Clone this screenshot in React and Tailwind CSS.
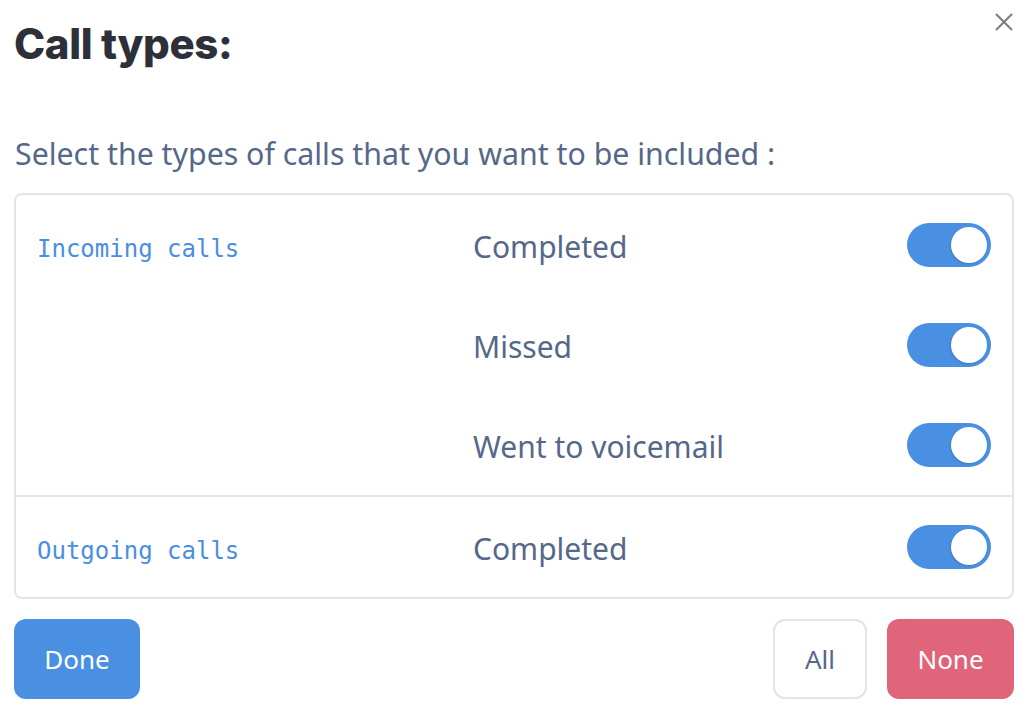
import React from "react";

function Toggle() {
  return (
    <div className="w-[84px] h-[44px] rounded-full bg-[#4a90e2] flex items-center justify-end pr-[4px]">
      <div className="w-[36px] h-[36px] rounded-full bg-white shadow-[-1px_1px_2px_rgba(0,0,0,0.15)]" />
    </div>
  );
}

function Item({ label }) {
  return (
    <div className="h-[100px] flex items-center justify-between pr-[21px]">
      <span className="text-[30px] leading-[40px] pt-[4px] text-[#56688a]" style={{ fontFamily: '"Noto Sans", sans-serif' }}>
        {label}
      </span>
      <Toggle />
    </div>
  );
}

function Group({ title, items, last }) {
  return (
    <div className={"flex " + (last ? "" : "border-b-2 border-[#e4e4e4]")}>
      <div className="w-[457px] pl-[21px] h-[100px] flex items-center pt-[8px]">
        <span className="text-[24px] text-[#4a8ee0]" style={{ fontFamily: '"DejaVu Sans Mono", monospace' }}>
          {title}
        </span>
      </div>
      <div className="flex-1 flex flex-col">
        {items.map((it) => (
          <Item key={it} label={it} />
        ))}
      </div>
    </div>
  );
}

export default function App() {
  return (
    <div className="w-[1036px] h-[714px] bg-white relative" style={{ fontFamily: '"Noto Sans", sans-serif' }}>
      <button className="absolute right-[22px] top-[12px] text-[#7a7a7a]">
        <svg width="20" height="20" viewBox="0 0 20 20">
          <path d="M2 2 L18 18 M18 2 L2 18" stroke="#808080" strokeWidth="2.2" />
        </svg>
      </button>
      <div className="px-[14px] pt-[17px]">
        <h1 className="text-[42px] font-extrabold text-[#2d3039] leading-[54px] tracking-[-0.4px]" style={{ fontFamily: 'Inter, sans-serif' }}>
          Call types:
        </h1>
        <p className="mt-[64px] text-[30.3px] text-[#56688a] leading-[38px] pl-[1px]">
          Select the types of calls that you want to be included :
        </p>
        <div className="mt-[20px] border-2 border-[#e4e4e4] rounded-[8px] w-[1000px]">
          <Group title="Incoming calls" items={["Completed", "Missed", "Went to voicemail"]} />
          <Group title="Outgoing calls" items={["Completed"]} last />
        </div>
        <div className="mt-[20px] flex items-center justify-between w-[1000px]">
          <button className="w-[126px] h-[80px] rounded-[12px] bg-[#4a90e2] text-white text-[26px]">Done</button>
          <div className="flex gap-[20px]">
            <button className="w-[94px] h-[80px] rounded-[12px] border-2 border-[#e4e4e4] bg-white text-[#56688a] text-[26px]">All</button>
            <button className="w-[127px] h-[80px] rounded-[12px] bg-[#e0647a] text-white text-[26px]">None</button>
          </div>
        </div>
      </div>
    </div>
  );
}
